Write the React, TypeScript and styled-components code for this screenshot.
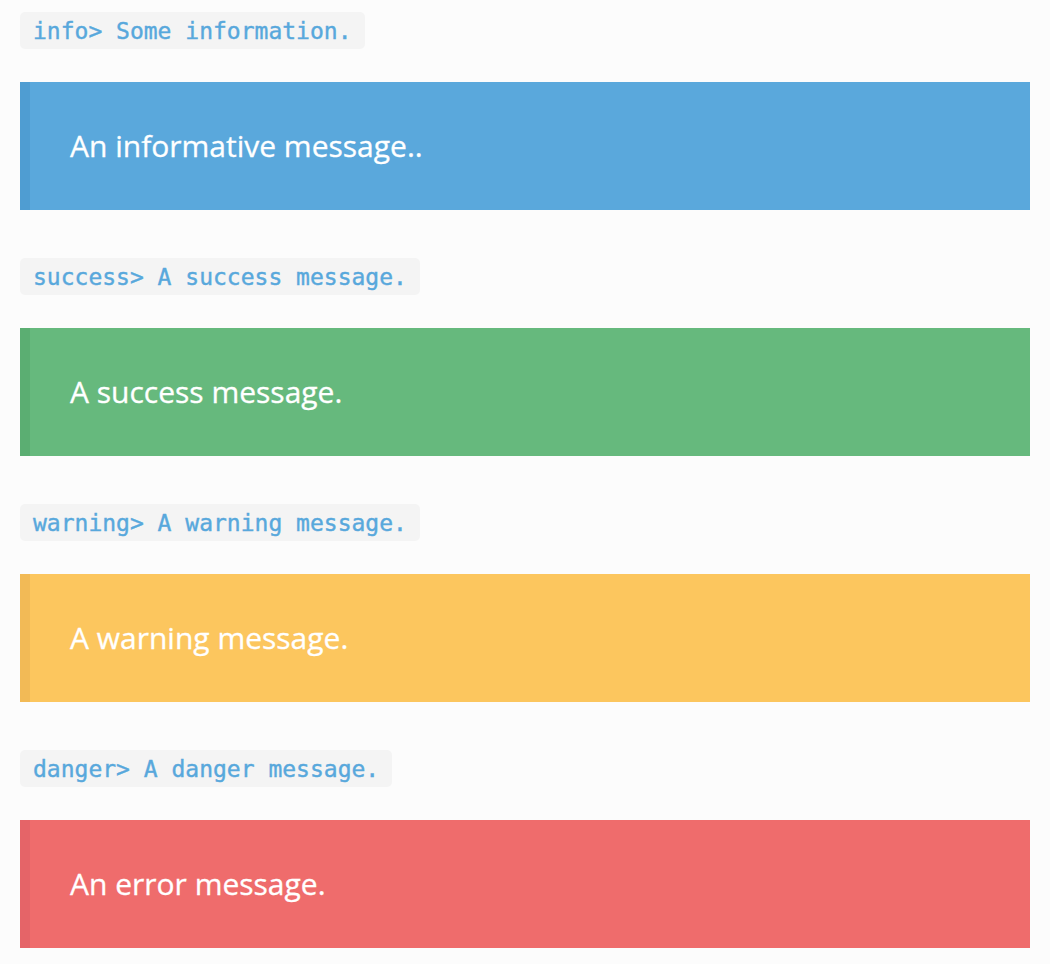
import React from "react";
import styled, { createGlobalStyle } from "styled-components";

const Global = createGlobalStyle`
  html, body { margin: 0; padding: 0; background: #fcfcfc; }
  body { font-family: "Open Sans", "Liberation Sans", sans-serif; }
`;

const Page = styled.main`
  padding: 12px 20px 16px;
  display: flex;
  flex-direction: column;
`;

const Section = styled.section`
  display: flex;
  flex-direction: column;
  align-items: flex-start;
  gap: 33px;
  margin-bottom: 48px;
  &:last-child { margin-bottom: 0; }
`;

const Code = styled.code`
  display: inline-block;
  background: #f4f4f4;
  color: #58a8dc;
  border-radius: 5px;
  padding: 5px 13px 3px;
  font-family: "DejaVu Sans Mono", "Liberation Mono", monospace;
  font-size: 23px;
  line-height: 29px;
  white-space: pre;
  -webkit-text-stroke: 0.4px #58a8dc;
`;

const palette = {
  info: { bg: "#5aa8dc", edge: "#4f9dd2" },
  success: { bg: "#66b97d", edge: "#5bae72" },
  warning: { bg: "#fcc65e", edge: "#f2ba56" },
  danger: { bg: "#ef6c6c", edge: "#e56468" },
} as const;

type Kind = keyof typeof palette;

const Banner = styled.div<{ $kind: Kind }>`
  align-self: stretch;
  box-sizing: border-box;
  background: ${(p) => palette[p.$kind].bg};
  border-left: 10px solid ${(p) => palette[p.$kind].edge};
  color: #ffffff;
  padding: 40px 40px;
  font-size: 30px;
  line-height: 48px;
  -webkit-text-stroke: 0.3px #ffffff;
`;

const items: { kind: Kind; code: string; text: string }[] = [
  { kind: "info", code: "info> Some information.", text: "An informative message.." },
  { kind: "success", code: "success> A success message.", text: "A success message." },
  { kind: "warning", code: "warning> A warning message.", text: "A warning message." },
  { kind: "danger", code: "danger> A danger message.", text: "An error message." },
];

export default function App() {
  return (
    <>
      <Global />
      <Page>
        {items.map((it) => (
          <Section key={it.kind}>
            <Code>{it.code}</Code>
            <Banner $kind={it.kind}>{it.text}</Banner>
          </Section>
        ))}
      </Page>
    </>
  );
}
